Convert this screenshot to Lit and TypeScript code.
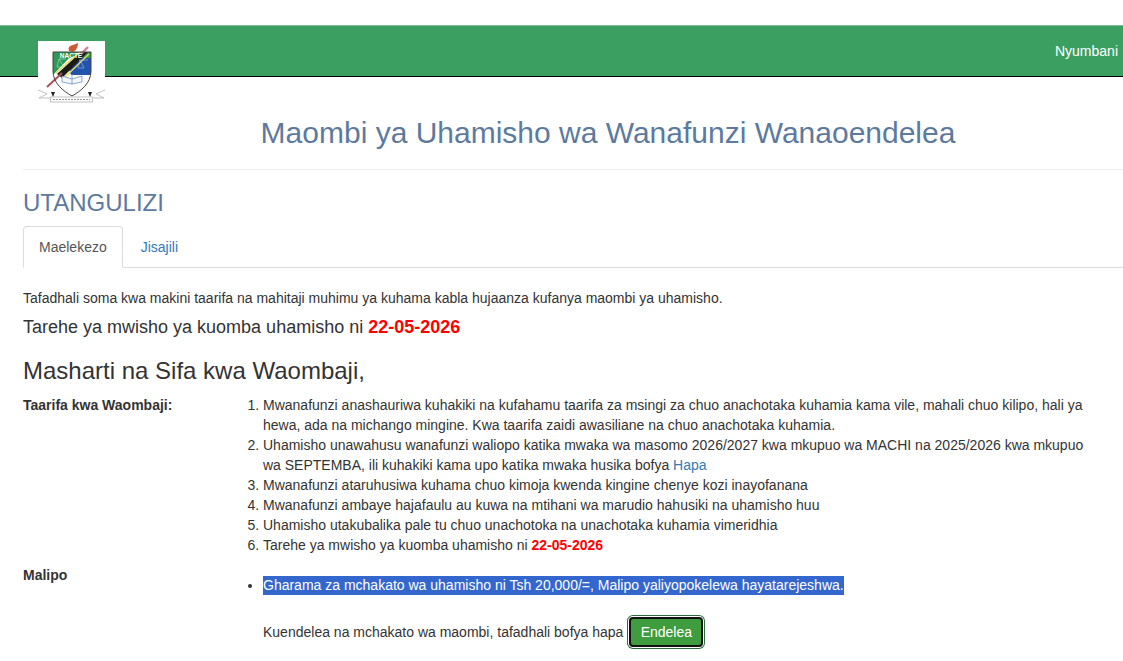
import { LitElement, html, css } from "lit";
import { customElement } from "lit/decorators.js";

@customElement("app-root")
export class AppRoot extends LitElement {
  static styles = css`
    :host { display: block; height: 661px; overflow: hidden; background: #fff; color: #333; font: 14px/20px "Liberation Sans", Arial, sans-serif; }
    * { box-sizing: border-box; }
    .nav { position: relative; margin-top: 25px; height: 52px; background: #3c9f62; border-bottom: 1px solid #000; border-top: 1px solid #7dbb95; display: flex; justify-content: flex-end; align-items: center; padding: 1px 5px 1px 0; }
    .nav a { color: #fff; }
    .logo { position: absolute; left: 38px; top: 15px; width: 67px; height: 62px; background: #fff; }
    .wrap { margin-left: 23px; width: 1170px; }
    h1 { margin: 0; padding: 36px 0 18px; height: 93px; border-bottom: 1px solid #eee; font-size: 30px; line-height: 39px; font-weight: 400; text-align: center; color: #5d7a9e; }
    h2 { margin: 18px 0 0; font-size: 24px; line-height: 30px; font-weight: 400; color: #5d7a9e; }
    .tabs { display: flex; margin-top: 8px; height: 42px; border-bottom: 1px solid #ddd; }
    .tab { padding: 11px 15px 9px; height: 42px; margin-right: 2px; color: #337ab7; }
    .tab + .tab { margin-left: 1px; }
    .tab.on { color: #555; background: #fff; border: 1px solid #ddd; border-bottom-color: #fff; border-radius: 4px 4px 0 0; padding-top: 10px; }
    .intro { margin: 20px 0 0; }
    .deadline { margin: 7px 0 0; font-size: 18px; line-height: 24px; }
    .red { color: #f00; font-weight: 700; }
    h3 { margin: 17px 0 0; font-size: 24px; line-height: 30px; font-weight: 400; }
    .row { display: grid; grid-template-columns: 200px 880px; }
    .row.info { margin-top: 9px; }
    .row.pay { margin-top: 10px; }
    .label { font-weight: 700; }
    ol, ul { margin: 0; padding-left: 40px; }
    a { color: #337ab7; text-decoration: none; }
    .sel { background: #3367cd; color: #fff; padding: 1px 0 2px; }
    ul { margin-top: 10px; }
    .go { margin: 20px 0 0 40px; height: 34px; display: flex; align-items: center; gap: 5px; }
    .btn { display: flex; align-items: center; justify-content: center; height: 30px; width: 74px; margin-left: 1px; color: #fff; background: #3f9c3f; border: 2px solid #111; border-radius: 4px; box-shadow: 0 0 0 1px #fff, 0 0 0 2px #2d6a3d; }
    svg { display: block; }
  `;

  render() {
    return html`
      <nav class="nav">
        <a href="#">Nyumbani</a>
        <div class="logo">
          <svg width="67" height="62" viewBox="0 0 67 62" aria-label="Nembo ya NACTE">
            <defs><filter id="b"><feGaussianBlur stdDeviation="0.35"/></filter></defs>
            <g filter="url(#b)">
              <path d="M15 11 H53 V30 C53 42 43 50 34 55 C25 50 15 42 15 30 Z" fill="#fff"/>
              <path d="M15 11 H34 V14 L15 34 Z" fill="#2b9a57"/>
              <path d="M15 11 H53 V17 H15 Z" fill="#2b9a57"/>
              <path d="M38 17 H53 V34 H33 L30 25 Z" fill="#2352ad"/>
              <path d="M19 33 L43 11 H50 L24 37 Z" fill="#1a1a18"/>
              <path d="M18 32 L42 11 M25 38 L51 13" stroke="#e4de55" stroke-width="1.4" fill="none"/>
              <path d="M9 46 L24 32" stroke="#a9525e" stroke-width="2"/>
              <path d="M43 13 L50 6" stroke="#c9829a" stroke-width="2.4"/>
              <path d="M32 5 C35 4 38 3 40 2 C40 6 38 10 35 11 C31 11 29 8 32 5 Z" fill="#cc5a33"/>
              <path d="M15 11 H53 V30 C53 42 43 50 34 55 C25 50 15 42 15 30 Z" fill="none" stroke="#4a4040" stroke-width="1"/>
              <path d="M24 35 L34 38 L44 35 V41 L34 43 L24 41 Z" fill="#f2f6fb" stroke="#6f93c0" stroke-width=".8"/>
              <path d="M34 33 V43" stroke="#6f93c0" stroke-width=".8"/>
              <path d="M21 18 H28 M21 18 L19 26 H26 Z" fill="none" stroke="#b7dcc3" stroke-width=".6"/>
              <path d="M41 19 H50 M42 19 L40 27 H46 Z" fill="none" stroke="#a9bfe6" stroke-width=".6"/>
              <path d="M0 49 L9 53 L1 57 H12 M67 49 L58 53 L66 57 H55" fill="none" stroke="#aaa" stroke-width=".7"/>
              <path d="M13 51 L17 51 L15 56 Z M50 51 L54 51 L52 56 Z" fill="#222"/>
              <rect x="12.5" y="56" width="42" height="5" fill="#fff" stroke="#aaa" stroke-width=".7"/>
              <path d="M15 58.5 H52" stroke="#999" stroke-width="1.2" stroke-dasharray="2 1"/>
            </g>
            <text x="33" y="17" text-anchor="middle" font-family="Liberation Sans" font-size="6.5" font-weight="700" fill="#fff">NACTE</text>
          </svg>
        </div>
      </nav>
      <main class="wrap">
        <h1>Maombi ya Uhamisho wa Wanafunzi Wanaoendelea</h1>
        <h2>UTANGULIZI</h2>
        <div class="tabs">
          <div class="tab on">Maelekezo</div>
          <a class="tab" href="#">Jisajili</a>
        </div>
        <p class="intro">Tafadhali soma kwa makini taarifa na mahitaji muhimu ya kuhama kabla hujaanza kufanya maombi ya uhamisho.</p>
        <p class="deadline">Tarehe ya mwisho ya kuomba uhamisho ni <span class="red">22-05-2026</span></p>
        <h3>Masharti na Sifa kwa Waombaji,</h3>
        <div class="row info">
          <div class="label">Taarifa kwa Waombaji:</div>
          <ol>
            <li>Mwanafunzi anashauriwa kuhakiki na kufahamu taarifa za msingi za chuo anachotaka kuhamia kama vile, mahali chuo kilipo, hali ya hewa, ada na michango mingine. Kwa taarifa zaidi awasiliane na chuo anachotaka kuhamia.</li>
            <li>Uhamisho unawahusu wanafunzi waliopo katika mwaka wa masomo 2026/2027 kwa mkupuo wa MACHI na 2025/2026 kwa mkupuo wa SEPTEMBA, ili kuhakiki kama upo katika mwaka husika bofya <a href="#">Hapa</a></li>
            <li>Mwanafunzi ataruhusiwa kuhama chuo kimoja kwenda kingine chenye kozi inayofanana</li>
            <li>Mwanafunzi ambaye hajafaulu au kuwa na mtihani wa marudio hahusiki na uhamisho huu</li>
            <li>Uhamisho utakubalika pale tu chuo unachotoka na unachotaka kuhamia vimeridhia</li>
            <li>Tarehe ya mwisho ya kuomba uhamisho ni <span class="red">22-05-2026</span></li>
          </ol>
        </div>
        <div class="row pay">
          <div class="label">Malipo</div>
          <div>
            <ul><li><span class="sel">Gharama za mchakato wa uhamisho ni Tsh 20,000/=, Malipo yaliyopokelewa hayatarejeshwa.</span></li></ul>
            <div class="go">Kuendelea na mchakato wa maombi, tafadhali bofya hapa <a class="btn" href="#">Endelea</a></div>
          </div>
        </div>
      </main>
    `;
  }
}
